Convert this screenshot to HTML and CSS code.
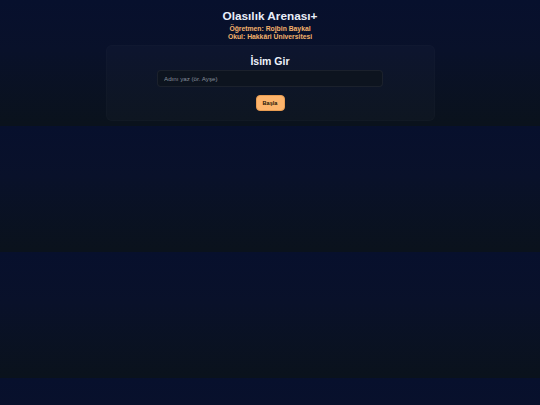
FILE: index.html
```html
<!DOCTYPE html>
<html lang="tr">
<head>
<meta charset="utf-8">
<title>Olasılık Arenası+</title>
<link rel="stylesheet" href="styles.css">
</head>
<body>
<header class="top">
  <h1 class="title">Olasılık Arenası+</h1>
  <p class="sub">Öğretmen: Rojbin Baykal</p>
  <p class="sub">Okul: Hakkâri Üniversitesi</p>
</header>
<main class="card">
  <h2 class="card-title">İsim Gir</h2>
  <input class="name-input" type="text" placeholder="Adını yaz (ör. Ayşe)">
  <button class="start-btn" type="button">Başla</button>
</main>
</body>
</html>
```

FILE: styles.css
```css
html {
  background: linear-gradient(180deg, #07102d 0%, #09112a 40%, #0a121c 100%);
  background-size: 100% 126px;
  background-repeat: repeat;
  min-height: 100%;
}
body {
  margin: 0;
  padding: 9px 0 7px;
  font-family: "Liberation Sans", Arial, sans-serif;
  color: #e6ecf8;
}
.top {
  text-align: center;
}
.title {
  margin: 0;
  font-size: 11.8px;
  line-height: 14px;
  font-weight: 700;
  color: #e9eefa;
}
.title + .sub {
  margin-top: 2px;
}
.sub {
  margin: 0;
  font-size: 6.8px;
  line-height: 7.5px;
  font-weight: 700;
  color: #f4b26c;
}
.card {
  width: 329px;
  box-sizing: border-box;
  margin: 5px auto 0;
  padding: 9px 0 9px;
  background: rgba(255, 255, 255, 0.018);
  border: 1px solid rgba(255, 255, 255, 0.015);
  border-radius: 6px;
  display: flex;
  flex-direction: column;
  align-items: center;
}
.card-title {
  margin: 0;
  font-size: 10.5px;
  line-height: 12px;
  font-weight: 700;
  color: #eef2fb;
}
.name-input {
  margin-top: 3px;
  width: 226px;
  height: 17px;
  box-sizing: border-box;
  padding: 0 6px;
  background: #0d141f;
  border: 1px solid rgba(255, 255, 255, 0.06);
  border-radius: 4px;
  font-family: "Liberation Sans", Arial, sans-serif;
  font-size: 6.2px;
  color: #cfd6e2;
  outline: none;
}
.name-input::placeholder {
  color: #858e9c;
}
.start-btn {
  margin-top: 8px;
  width: 29px;
  height: 16px;
  padding: 0;
  background: #fdb46c;
  border: 1px solid #e89c52;
  border-radius: 4px;
  font-family: "Liberation Sans", Arial, sans-serif;
  font-size: 5.6px;
  font-weight: 700;
  color: #1b1408;
}
```
